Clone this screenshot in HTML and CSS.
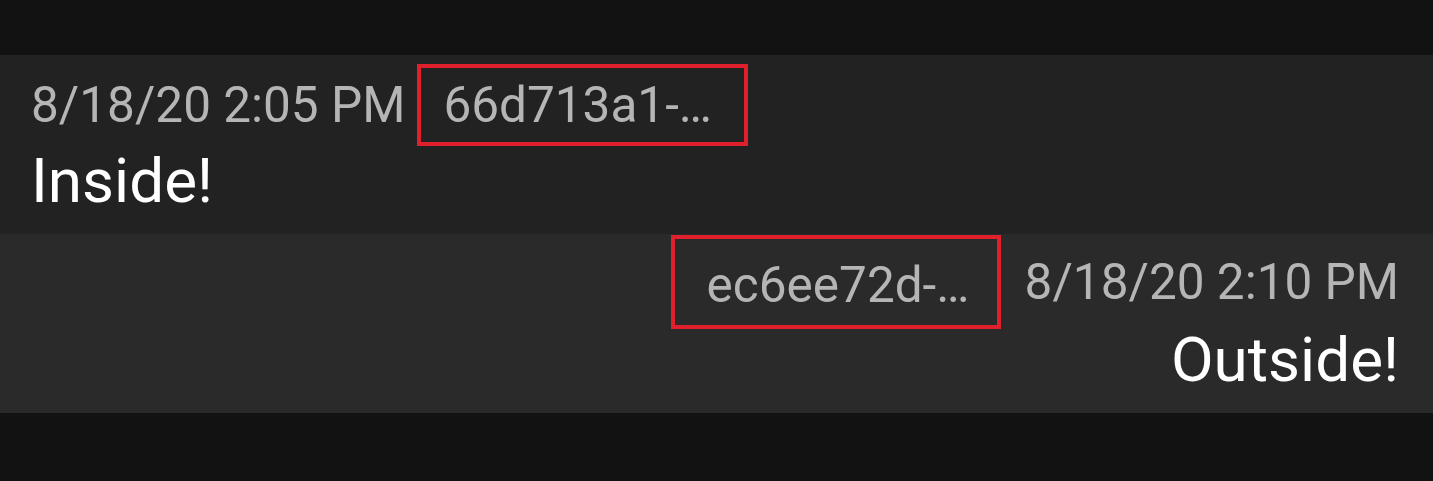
FILE: index.html
```html
<!DOCTYPE html>
<html>
<head>
<meta charset="utf-8">
<link rel="stylesheet" href="styles.css">
</head>
<body>
<div class="screen">
  <div class="top-gap"></div>
  <div class="msg msg--in">
    <div class="msg-head">
      <span class="time">8/18/20 2:05 PM</span>
      <span class="tag tag--in">66d713a1-…</span>
    </div>
    <div class="body">Inside!</div>
  </div>
  <div class="msg msg--out">
    <div class="msg-head">
      <span class="tag tag--out">ec6ee72d-…</span>
      <span class="time">8/18/20 2:10 PM</span>
    </div>
    <div class="body">Outside!</div>
  </div>
</div>
</body>
</html>
```
FILE: styles.css
```css
html, body {
  margin: 0;
  padding: 0;
  background: #121212;
}
body {
  font-family: Roboto, "Noto Sans", sans-serif;
  width: 1433px;
  height: 481px;
  overflow: hidden;
}
.top-gap {
  height: 55px;
}
.msg {
  display: flex;
  flex-direction: column;
  padding: 0 34px 17px 31px;
  height: 179px;
  box-sizing: border-box;
}
.msg--in {
  background: #222222;
  padding-top: 9px;
  align-items: flex-start;
}
.msg--out {
  background: #2a2a2a;
  padding-top: 1px;
  align-items: flex-end;
}
.msg-head {
  display: flex;
  align-items: center;
}
.msg--in .msg-head {
  gap: 12px;
  margin-bottom: -1px;
}
.msg--out .msg-head {
  gap: 24px;
  margin-bottom: -5px;
}
.time {
  font-size: 49.5px;
  line-height: 58px;
  color: #b5b5b5;
  white-space: nowrap;
}
.tag {
  box-sizing: border-box;
  width: 331px;
  border: 4px solid #e0202c;
  font-size: 49.5px;
  line-height: 58px;
  color: #b5b5b5;
  display: flex;
  align-items: center;
  white-space: nowrap;
}
.tag--in {
  height: 82px;
  padding-left: 22px;
}
.tag--out {
  height: 94px;
  width: 330px;
  padding-left: 32px;
  padding-top: 6px;
}
.body {
  font-size: 62px;
  line-height: 72px;
  color: #ffffff;
  white-space: nowrap;
}
```
